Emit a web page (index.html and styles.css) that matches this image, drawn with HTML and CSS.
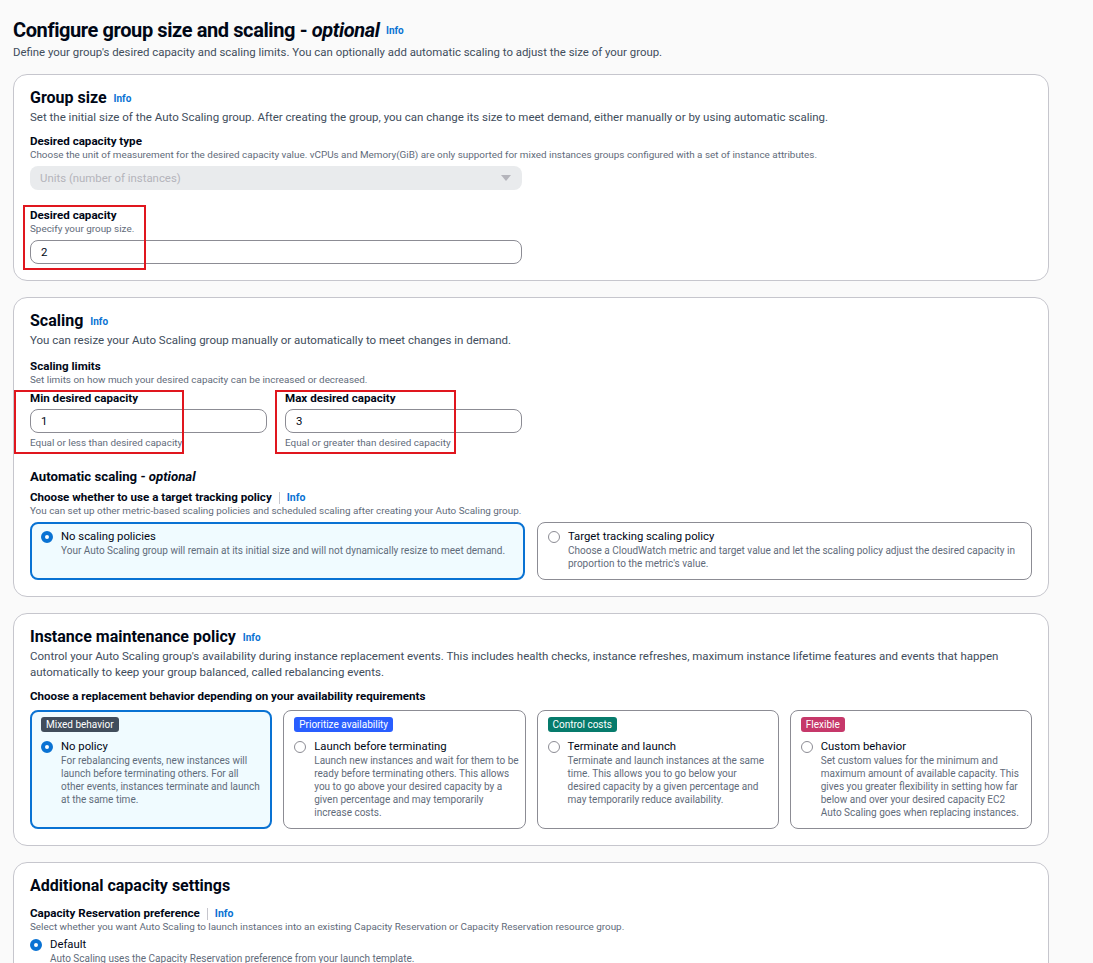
FILE: index.html
```html
<!DOCTYPE html>
<html lang="en">
<head>
<meta charset="utf-8">
<title>Configure group size and scaling</title>
<link rel="stylesheet" href="styles.css">
</head>
<body>
<div class="page">
  <header class="page-head">
    <h1>Configure group size and scaling - <em>optional</em> <a class="info info-lg">Info</a></h1>
    <p class="page-desc">Define your group's desired capacity and scaling limits. You can optionally add automatic scaling to adjust the size of your group.</p>
  </header>

  <section class="card">
    <h2>Group size <a class="info">Info</a></h2>
    <p class="desc">Set the initial size of the Auto Scaling group. After creating the group, you can change its size to meet demand, either manually or by using automatic scaling.</p>
    <div class="field field-type">
      <div class="label">Desired capacity type</div>
      <div class="hint">Choose the unit of measurement for the desired capacity value. vCPUs and Memory(GiB) are only supported for mixed instances groups configured with a set of instance attributes.</div>
      <div class="select"><span>Units (number of instances)</span><span class="caret"></span></div>
    </div>
    <div class="field field-desired">
      <div class="label">Desired capacity</div>
      <div class="hint">Specify your group size.</div>
      <div class="input">2</div>
      <span class="mark mark-desired"></span>
    </div>
  </section>

  <section class="card">
    <h2>Scaling <a class="info">Info</a></h2>
    <p class="desc">You can resize your Auto Scaling group manually or automatically to meet changes in demand.</p>
    <div class="label label-top">Scaling limits</div>
    <div class="hint">Set limits on how much your desired capacity can be increased or decreased.</div>
    <div class="limits">
      <div class="field">
        <div class="label">Min desired capacity</div>
        <div class="input">1</div>
        <div class="hint hint-below">Equal or less than desired capacity</div>
        <span class="mark mark-min"></span>
      </div>
      <div class="field">
        <div class="label">Max desired capacity</div>
        <div class="input">3</div>
        <div class="hint hint-below">Equal or greater than desired capacity</div>
        <span class="mark mark-max"></span>
      </div>
    </div>
    <h3 class="sub">Automatic scaling - <em>optional</em></h3>
    <div class="label label-info">Choose whether to use a target tracking policy <span class="sep"></span><a class="info info-sm">Info</a></div>
    <div class="hint">You can set up other metric-based scaling policies and scheduled scaling after creating your Auto Scaling group.</div>
    <div class="tiles tiles-2">
      <div class="tile selected">
        <div class="tile-row">
          <span class="radio on"></span>
          <div>
            <div class="tile-title">No scaling policies</div>
            <div class="tile-desc">Your Auto Scaling group will remain at its initial size and will not dynamically resize to meet demand.</div>
          </div>
        </div>
      </div>
      <div class="tile">
        <div class="tile-row">
          <span class="radio"></span>
          <div>
            <div class="tile-title">Target tracking scaling policy</div>
            <div class="tile-desc">Choose a CloudWatch metric and target value and let the scaling policy adjust the desired capacity in proportion to the metric's value.</div>
          </div>
        </div>
      </div>
    </div>
  </section>

  <section class="card">
    <h2>Instance maintenance policy <a class="info">Info</a></h2>
    <p class="desc">Control your Auto Scaling group's availability during instance replacement events. This includes health checks, instance refreshes, maximum instance lifetime features and events that happen automatically to keep your group balanced, called rebalancing events.</p>
    <div class="label label-choose">Choose a replacement behavior depending on your availability requirements</div>
    <div class="tiles tiles-4">
      <div class="tile selected">
        <span class="badge badge-grey">Mixed behavior</span>
        <div class="tile-row">
          <span class="radio on"></span>
          <div>
            <div class="tile-title">No policy</div>
            <div class="tile-desc">For rebalancing events, new instances will<br>launch before terminating others. For all<br>other events, instances terminate and launch<br>at the same time.</div>
          </div>
        </div>
      </div>
      <div class="tile">
        <span class="badge badge-blue">Prioritize availability</span>
        <div class="tile-row">
          <span class="radio"></span>
          <div>
            <div class="tile-title">Launch before terminating</div>
            <div class="tile-desc">Launch new instances and wait for them to be<br>ready before terminating others. This allows<br>you to go above your desired capacity by a<br>given percentage and may temporarily<br>increase costs.</div>
          </div>
        </div>
      </div>
      <div class="tile">
        <span class="badge badge-green">Control costs</span>
        <div class="tile-row">
          <span class="radio"></span>
          <div>
            <div class="tile-title">Terminate and launch</div>
            <div class="tile-desc">Terminate and launch instances at the same<br>time. This allows you to go below your<br>desired capacity by a given percentage and<br>may temporarily reduce availability.</div>
          </div>
        </div>
      </div>
      <div class="tile">
        <span class="badge badge-red">Flexible</span>
        <div class="tile-row">
          <span class="radio"></span>
          <div>
            <div class="tile-title">Custom behavior</div>
            <div class="tile-desc">Set custom values for the minimum and<br>maximum amount of available capacity. This<br>gives you greater flexibility in setting how far<br>below and over your desired capacity EC2<br>Auto Scaling goes when replacing instances.</div>
          </div>
        </div>
      </div>
    </div>
  </section>

  <section class="card card-last">
    <h2>Additional capacity settings</h2>
    <div class="label label-cr">Capacity Reservation preference <span class="sep"></span><a class="info info-sm">Info</a></div>
    <div class="hint">Select whether you want Auto Scaling to launch instances into an existing Capacity Reservation or Capacity Reservation resource group.</div>
    <div class="option">
      <span class="radio on"></span>
      <div>
        <div class="tile-title">Default</div>
        <div class="tile-desc">Auto Scaling uses the Capacity Reservation preference from your launch template.</div>
      </div>
    </div>
  </section>
</div>
</body>
</html>
```

FILE: styles.css
```css
* { box-sizing: border-box; }

html, body {
  margin: 0;
  padding: 0;
}

body {
  background: #fafafa;
  font-family: Roboto, "Liberation Sans", Arial, sans-serif;
  color: #000716;
  overflow: hidden;
  height: 963px;
}

.page {
  padding: 18px 0 0 13px;
  width: 1049px;
}

h1 {
  margin: 0;
  height: 24px;
  font-size: 20px;
  line-height: 24px;
  font-weight: 700;
  letter-spacing: -0.4px;
}

h1 em {
  font-weight: 700;
}

.info {
  color: #0972d3;
  font-size: 10px;
  font-weight: 700;
  letter-spacing: 0;
  vertical-align: 1px;
  margin-left: 2px;
}

.info-lg {
  font-size: 10px;
  vertical-align: 3px;
}

.info-sm {
  margin-left: 0;
  vertical-align: 0;
  font-size: 10.5px;
}

.page-desc {
  margin: 2px 0 0;
  font-size: 11.4px;
  line-height: 16px;
  color: #414d5c;
}

.card {
  margin-top: 14px;
  background: #ffffff;
  border: 1px solid #c6c6cd;
  border-radius: 14px;
  padding: 12px 16px 16px 16px;
}

.card + .card {
  margin-top: 16px;
}

.card-last {
  height: 140px;
}

h2 {
  margin: 0;
  height: 22px;
  font-size: 16px;
  line-height: 22px;
  font-weight: 700;
}

h2 .info {
  margin-left: 3px;
}

.desc {
  margin: 0;
  font-size: 11.5px;
  line-height: 16px;
  color: #414d5c;
}

.label {
  font-size: 11.6px;
  line-height: 15px;
  font-weight: 700;
}

.hint {
  font-size: 9.9px;
  line-height: 12px;
  color: #5f6b7a;
}

.field {
  position: relative;
}

.field-type {
  margin-top: 9px;
}

.select {
  margin-top: 5px;
  width: 492px;
  height: 24px;
  background: #e9ebed;
  border-radius: 8px;
  display: flex;
  align-items: center;
  justify-content: space-between;
  padding: 0 11px 0 10px;
  font-size: 11.4px;
  color: #b4b4bb;
}

.caret {
  width: 0;
  height: 0;
  border-left: 5px solid transparent;
  border-right: 5px solid transparent;
  border-top: 6px solid #b4b4bb;
}

.field-desired {
  margin-top: 18px;
}

.input {
  margin-top: 5px;
  width: 492px;
  height: 24px;
  border: 1px solid #8c8c94;
  border-radius: 8px;
  display: flex;
  align-items: center;
  padding: 0 10px;
  font-size: 11.4px;
  color: #000716;
}

.mark {
  position: absolute;
  border: 2px solid #e0161e;
  pointer-events: none;
}

.mark-desired {
  left: -7px;
  top: -3px;
  width: 123px;
  height: 65px;
}

.label-top {
  margin-top: 11px;
}

.limits {
  margin-top: 5px;
  display: grid;
  grid-template-columns: 237px 237px;
  column-gap: 18px;
}

.limits .input {
  width: 237px;
  margin-top: 3px;
}

.hint-below {
  margin-top: 4px;
}

.mark-min {
  left: -16px;
  top: -1px;
  width: 170px;
  height: 64px;
}

.mark-max {
  left: -10px;
  top: -1px;
  width: 181px;
  height: 64px;
}

.sub {
  margin: 20px 0 0;
  font-size: 13.2px;
  line-height: 16px;
  font-weight: 700;
}

.sub em {
  font-weight: 700;
}

.label-info {
  margin-top: 5px;
  display: flex;
  align-items: center;
}

.sep {
  display: inline-block;
  width: 1px;
  height: 12px;
  background: #c6c6cd;
  margin: 0 7px;
}

.tiles {
  margin-top: 5px;
  display: grid;
}

.tiles-2 {
  grid-template-columns: 1fr 1fr;
  column-gap: 12px;
}

.tiles-4 {
  margin-top: 6px;
  grid-template-columns: repeat(4, 1fr);
  column-gap: 11px;
}

.tile {
  border: 1px solid #8c8c94;
  border-radius: 8px;
  padding: 7px 9px 8px 10px;
  background: #ffffff;
}

.tile.selected {
  border: 2px solid #0972d3;
  background: #f0fbff;
  padding: 6px 8px 7px 9px;
}

.tiles-2 .tile {
  height: 58px;
}

.tiles-4 .tile {
  height: 119px;
  padding-top: 6px;
  padding-right: 2px;
  display: flex;
  flex-direction: column;
  align-items: flex-start;
}

.tiles-4 .tile.selected {
  padding-top: 5px;
  padding-right: 1px;
}

.tiles-4 .tile-desc {
  white-space: nowrap;
}

.tile-row {
  display: flex;
  gap: 8px;
  align-items: flex-start;
}

.badge {
  display: block;
  height: 15px;
  line-height: 15px;
  padding: 0 5px;
  border-radius: 3px;
  font-size: 10px;
  color: #ffffff;
  margin-bottom: 8px;
}

.badge-grey { background: #414d5c; }
.badge-blue { background: #295eff; }
.badge-green { background: #067b6c; }
.badge-red { background: #c6386a; }

.radio {
  flex: none;
  width: 12px;
  height: 12px;
  border-radius: 50%;
  border: 1px solid #8c8c94;
  background: #ffffff;
  margin-top: 1px;
}

.radio.on {
  border: 4px solid #0972d3;
}

.tile-title {
  font-size: 11.3px;
  line-height: 14px;
  color: #000716;
}

.tile-desc {
  font-size: 10px;
  line-height: 13px;
  color: #5f6b7a;
}

.label-choose {
  margin-top: 9px;
}

.label-cr {
  margin-top: 9px;
  display: flex;
  align-items: center;
}

.option {
  margin-top: 5px;
  display: flex;
  gap: 8px;
  align-items: flex-start;
}
```
